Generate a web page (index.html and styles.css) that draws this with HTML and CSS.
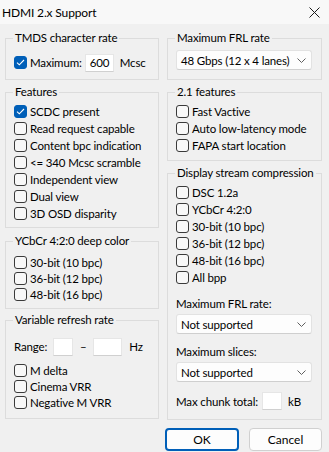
FILE: index.html
```html
<!DOCTYPE html>
<html lang="en">
<head>
    <meta charset="UTF-8">
    <title>HDMI 2.x Support</title>
    <link rel="stylesheet" href="styles.css">
</head>
<body>

<div class="titlebar">
    <span class="title">HDMI 2.x Support</span>
    <svg class="close" width="11" height="11" viewBox="0 0 11 11">
        <path d="M0.5 0.5 L10.5 10.5 M10.5 0.5 L0.5 10.5" stroke="#1a1a1a" stroke-width="1" fill="none"/>
    </svg>
</div>

<div class="cols">
    <div class="col">
        <fieldset class="tmds">
            <legend>TMDS character rate</legend>
            <div class="inline-row">
                <label class="check"><span class="box on"><svg width="9" height="7" viewBox="0 0 9 7"><path d="M1 3.6 L3.3 5.8 L8 1" stroke="#fff" stroke-width="1.1" fill="none"/></svg></span>Maximum:</label>
                <span class="edit w29">600</span>
                <span class="unit">Mcsc</span>
            </div>
        </fieldset>

        <fieldset class="features">
            <legend>Features</legend>
            <label class="check"><span class="box on"><svg width="9" height="7" viewBox="0 0 9 7"><path d="M1 3.6 L3.3 5.8 L8 1" stroke="#fff" stroke-width="1.1" fill="none"/></svg></span>SCDC present</label>
            <label class="check"><span class="box"></span>Read request capable</label>
            <label class="check"><span class="box"></span>Content bpc indication</label>
            <label class="check"><span class="box"></span>&lt;= 340 Mcsc scramble</label>
            <label class="check"><span class="box"></span>Independent view</label>
            <label class="check"><span class="box"></span>Dual view</label>
            <label class="check"><span class="box"></span>3D OSD disparity</label>
        </fieldset>

        <fieldset class="deep">
            <legend>YCbCr 4:2:0 deep color</legend>
            <label class="check"><span class="box"></span>30-bit (10 bpc)</label>
            <label class="check"><span class="box"></span>36-bit (12 bpc)</label>
            <label class="check"><span class="box"></span>48-bit (16 bpc)</label>
        </fieldset>

        <fieldset class="vrr">
            <legend>Variable refresh rate</legend>
            <div class="range-row">
                <span>Range:</span>
                <span class="edit w20"></span>
                <span class="dash">&ndash;</span>
                <span class="edit w29"></span>
                <span class="unit">Hz</span>
            </div>
            <div class="vrr-checks">
                <label class="check"><span class="box"></span>M delta</label>
                <label class="check"><span class="box"></span>Cinema VRR</label>
                <label class="check"><span class="box"></span>Negative M VRR</label>
            </div>
        </fieldset>
    </div>

    <div class="col">
        <fieldset class="frl">
            <legend>Maximum FRL rate</legend>
            <div class="combo">
                <span>48 Gbps (12 x 4 lanes)</span>
                <svg width="9" height="5" viewBox="0 0 9 5"><path d="M0.5 0.5 L4.5 4.5 L8.5 0.5" stroke="#5f5f5f" stroke-width="1" fill="none"/></svg>
            </div>
        </fieldset>

        <fieldset class="features21">
            <legend>2.1 features</legend>
            <label class="check"><span class="box"></span>Fast Vactive</label>
            <label class="check"><span class="box"></span>Auto low-latency mode</label>
            <label class="check"><span class="box"></span>FAPA start location</label>
        </fieldset>

        <fieldset class="dsc">
            <legend>Display stream compression</legend>
            <label class="check"><span class="box"></span>DSC 1.2a</label>
            <label class="check"><span class="box"></span>YCbCr 4:2:0</label>
            <label class="check"><span class="box"></span>30-bit (10 bpc)</label>
            <label class="check"><span class="box"></span>36-bit (12 bpc)</label>
            <label class="check"><span class="box"></span>48-bit (16 bpc)</label>
            <label class="check"><span class="box"></span>All bpp</label>

            <div class="field-label">Maximum FRL rate:</div>
            <div class="combo">
                <span>Not supported</span>
                <svg width="9" height="5" viewBox="0 0 9 5"><path d="M0.5 0.5 L4.5 4.5 L8.5 0.5" stroke="#5f5f5f" stroke-width="1" fill="none"/></svg>
            </div>

            <div class="field-label">Maximum slices:</div>
            <div class="combo">
                <span>Not supported</span>
                <svg width="9" height="5" viewBox="0 0 9 5"><path d="M0.5 0.5 L4.5 4.5 L8.5 0.5" stroke="#5f5f5f" stroke-width="1" fill="none"/></svg>
            </div>

            <div class="chunk-row">
                <span>Max chunk total:</span>
                <span class="edit w20"></span>
                <span class="unit">kB</span>
            </div>
        </fieldset>
    </div>
</div>

<div class="buttons">
    <button class="btn default">OK</button>
    <button class="btn">Cancel</button>
</div>

</body>
</html>
```

FILE: styles.css
```css
body {
    margin: 0;
    background-color: #f0f0f0;
    font-family: "Segoe UI", Lato, sans-serif;
    font-size: 11.5px;
    letter-spacing: -0.15px;
    color: #000;
    white-space: nowrap;
}

.titlebar {
    height: 24px;
    background: #f8f8f8;
    display: flex;
    align-items: center;
    justify-content: space-between;
    padding: 0 9px 0 2px;
}

.title {
    font-size: 12px;
    line-height: 16px;
    margin-top: 1px;
}

.cols {
    display: grid;
    grid-template-columns: 154px 155px;
    column-gap: 8px;
    padding: 6px 0 0 5px;
}

.col {
    display: flex;
    flex-direction: column;
}

fieldset {
    margin: 0;
    min-width: 0;
    border: 1px solid #dcdcdc;
    padding: 3px 8px 5px;
}

legend {
    padding: 0 2px;
    margin-left: -1px;
    line-height: 16px;
}

/* checkbox rows */
.check {
    display: flex;
    align-items: center;
    gap: 3px;
    height: 17px;
}

.box {
    width: 11px;
    height: 11px;
    flex: none;
    border: 1px solid #3a3a3a;
    border-radius: 3px;
    background: #f8f8f8;
    display: flex;
    align-items: center;
    justify-content: center;
}

.box.on {
    background: #005fb8;
    border-color: #005fb8;
}

.edit {
    display: inline-block;
    box-sizing: border-box;
    height: 18px;
    line-height: 16px;
    padding: 0 4px;
    background: #fff;
    border: 1px solid #e6e6e6;
    border-bottom-color: #d0d0d0;
}

.w20 { width: 20px; }
.w29 { width: 29px; }

.combo {
    box-sizing: border-box;
    height: 20px;
    width: 136px;
    background: #fdfdfd;
    border: 1px solid #e2e2e2;
    border-bottom-color: #cfcfcf;
    border-radius: 3px;
    display: flex;
    align-items: center;
    justify-content: space-between;
    padding: 0 5px 0 4px;
}

/* group specific spacing */
.tmds {
    padding-top: 7px;
    padding-bottom: 7px;
}

.inline-row {
    display: flex;
    align-items: center;
    height: 19px;
}

.inline-row .edit {
    margin-left: 3px;
    margin-right: 6px;
}

.features {
    margin-top: 4px;
}

.deep {
    margin-top: 5px;
    padding-top: 5px;
    padding-bottom: 6px;
}

.deep .check {
    height: 16px;
}

.vrr {
    margin-top: 3px;
    padding-top: 9px;
    padding-bottom: 8px;
}

.range-row {
    display: flex;
    align-items: center;
    height: 19px;
}

.range-row .edit.w20 {
    margin-left: 6px;
}

.dash {
    width: 20px;
    text-align: center;
}

.range-row .unit {
    margin-left: 7px;
}

.vrr-checks {
    margin-top: 6px;
}

.vrr-checks .check {
    height: 16px;
}

.frl {
    padding-top: 4px;
    padding-bottom: 9px;
}

.features21 {
    margin-top: 4px;
    padding-bottom: 6px;
}

.dsc {
    margin-top: 4px;
    padding-bottom: 9px;
}

.field-label {
    line-height: 16px;
    margin-top: 10px;
    margin-bottom: 2px;
}

.chunk-row {
    display: flex;
    align-items: center;
    height: 18px;
    margin-top: 10px;
}

.chunk-row .edit {
    margin-left: 4px;
    margin-right: 6px;
}

.buttons {
    display: flex;
    justify-content: flex-end;
    gap: 10px;
    padding: 8px 7px 0 0;
}

.btn {
    box-sizing: border-box;
    height: 23px;
    width: 73px;
    font-family: inherit;
    font-size: 12px;
    color: #000;
    background: #fdfdfd;
    border: 1px solid #d0d0d0;
    border-radius: 4px;
    padding: 0;
}

.btn.default {
    width: 74px;
    border: 2px solid #005fb8;
}
```
